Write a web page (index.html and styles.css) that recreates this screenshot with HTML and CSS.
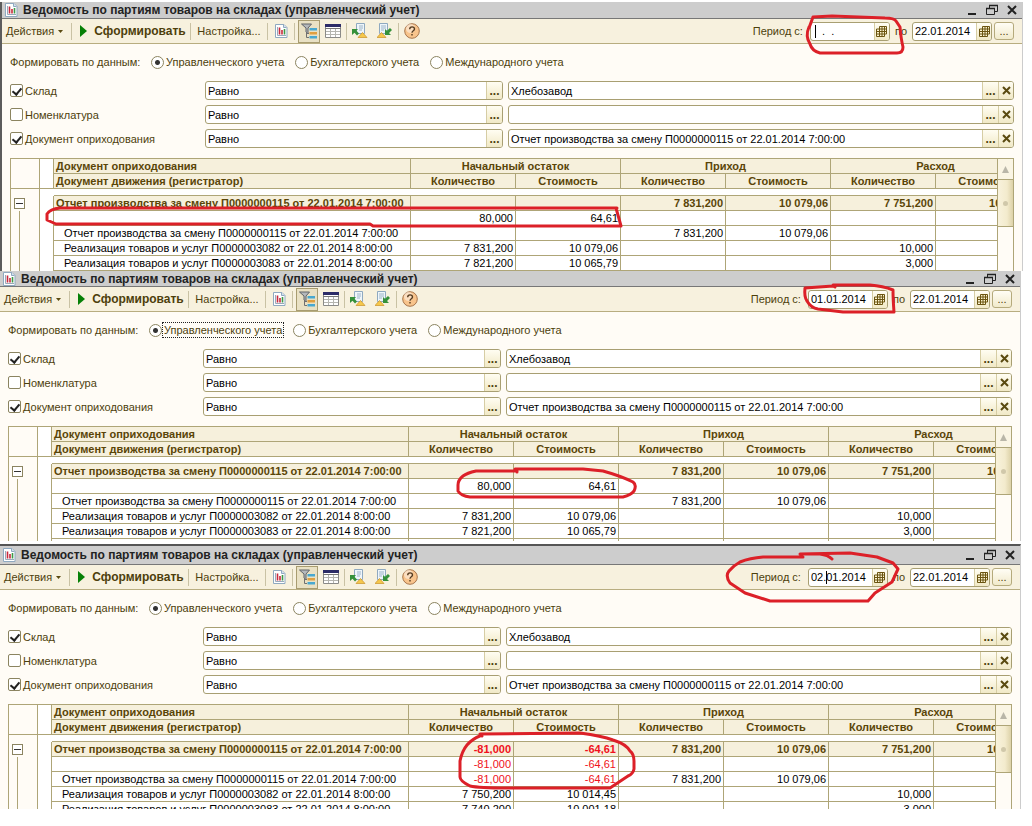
FILE: index.html
```html
<!DOCTYPE html>
<html lang="ru">
<head>
<meta charset="utf-8">
<title>Ведомость по партиям товаров на складах</title>
<link rel="stylesheet" href="styles.css">
</head>
<body>
<svg class="defs" aria-hidden="true">
  <symbol id="i-report" viewBox="0 0 14 14">
    <path d="M1.500.5h8.500l3 3v10H1.500z" fill="#fff" stroke="#8fa9c0"/><path d="M9.500.5v3h3" fill="#d5e2ee" stroke="#8fa9c0"/>
    <path d="M3.500 3v8.500H12" fill="none" stroke="#9ab"/><path d="M5.500 3.500v7M8 6v4.500" stroke="#c8283c" stroke-width="1.600"/><path d="M10.500 5v5.500" stroke="#3c9a48" stroke-width="1.600"/>
  </symbol>
  <symbol id="i-filter" viewBox="0 0 16 16">
    <path d="M.5 1h10L7 5v6l-2-2V5z" fill="#b4b8bc" stroke="#606468"/><path d="M5.500 9v5.500H8M6 10.500h2" fill="none" stroke="#707070"/>
    <path d="M8.500 5H16v2.500H8.500z" fill="#48a8d0"/><path d="M8.500 9H16v2.500H8.500z" fill="#e0a040"/><path d="M8.500 13H16v2.500H8.500z" fill="#48a8d0"/>
  </symbol>
  <symbol id="i-grid" viewBox="0 0 16 14">
    <path d="M.5.5h15v13H.5z" fill="#fff" stroke="#8a8a88"/><path d="M0 0h16v3H0z" fill="#2c2c68"/><path d="M0 4.500h16" stroke="#777"/>
    <path d="M1 7.500h14M1 10.500h14M5.500 5v8M10.500 5v8" stroke="#b5b5b0"/>
  </symbol>
  <symbol id="i-import" viewBox="0 0 16 16">
    <path d="M4.500.5h8v10h-8z" fill="#eef5fa" stroke="#8fa9c0"/><path d="M7 3h4M7 5h4M7 7h3" stroke="#9db4c8"/>
    <path d="M0 6h6L4.500 7.800 7 10.500 5 12.500 2.500 9.800 0 12z" fill="#35913a"/><path d="M6 14.500 10.500 9.500l4.500 5z" fill="#f5c84c" stroke="#c89028" stroke-width=".7"/>
  </symbol>
  <symbol id="i-export" viewBox="0 0 16 16">
    <path d="M2.500.5h8v10h-8z" fill="#eef5fa" stroke="#8fa9c0"/><path d="M4 3h5M4 5h5M4 7h3" stroke="#9db4c8"/>
    <path d="M8 12V6l2 1.800L13 5l2 2-3 2.900L14 12z" fill="#35913a"/><path d="M0 14.500 4.500 9.500l4.500 5z" fill="#f5c84c" stroke="#c89028" stroke-width=".7"/>
  </symbol>
  <symbol id="i-help" viewBox="0 0 16 16">
    <circle cx="8" cy="8" r="7.300" fill="#f8c48c" stroke="#a8764c"/><circle cx="6.500" cy="5.500" r="4.500" fill="#fff" opacity=".45"/>
    <path d="M5.700 6.200c0-3.200 4.800-3 4.800-.3C10.500 7.700 8 7.700 8 9.800M8 11v1.600" fill="none" stroke="#553c20" stroke-width="1.400"/>
  </symbol>
  <symbol id="i-cal" viewBox="0 0 11 11">
    <path d="M3.500.5h7v7.500h-2v2.500h-8v-7.500h3z" fill="#fbf3cf" stroke="#6b5410"/><path d="M1 5.500h9M1 8h8M3.500 2v8M6 1v9M8.500 1v8M3 3h7" fill="none" stroke="#6b5410"/>
  </symbol>
  <symbol id="i-x" viewBox="0 0 9 9"><path d="M1 1l7 7M8 1l-7 7" stroke="#5a4a10" stroke-width="2"/></symbol>
  <symbol id="i-play" viewBox="0 0 8 12"><path d="M0 0l7 6-7 6z" fill="#068006"/></symbol>
  <symbol id="i-down" viewBox="0 0 5 3"><path d="M0 0h5L2.500 3z" fill="#5a4a10"/></symbol>
  <symbol id="i-up" viewBox="0 0 7 7"><path d="M0 7l3.500-7L7 7z" fill="#b9b6a8"/></symbol>
  <symbol id="i-min" viewBox="0 0 12 12"><path d="M2 10h8" stroke="#222" stroke-width="2"/></symbol>
  <symbol id="i-restore" viewBox="0 0 12 12"><path d="M3.500 4V1.500h8v6H8.500M.5 4.500h8v6h-8z" fill="none" stroke="#222"/><path d="M3 1.500h9M0 4.500h9" stroke="#222" stroke-width="1.500"/></symbol>
  <symbol id="i-close" viewBox="0 0 12 12"><path d="M2 2l8 8M10 2l-8 8" stroke="#222" stroke-width="2"/></symbol>
</svg>

<main>
<section class="window window-first">
  <header class="title">
    <svg class="s14"><use href="#i-report"/></svg><h2>Ведомость по партиям товаров на складах (управленческий учет)</h2>
    <button aria-label="Свернуть"><svg class="s12"><use href="#i-min"/></svg></button><button aria-label="Восстановить"><svg class="s12"><use href="#i-restore"/></svg></button><button aria-label="Закрыть"><svg class="s12"><use href="#i-close"/></svg></button>
  </header>
  <div class="toolbar">
    <button class="menu">Действия<svg class="down"><use href="#i-down"/></svg></button><i class="sep"></i>
    <button class="run"><svg class="play"><use href="#i-play"/></svg>Сформировать</button><i class="sep"></i>
    <button class="setup">Настройка...</button><i class="sep"></i>
    <button class="tool" aria-label="Отчет"><svg class="s14"><use href="#i-report"/></svg></button><i class="sep"></i>
    <button class="tool pressed" aria-label="Отбор"><svg class="s16"><use href="#i-filter"/></svg></button>
    <button class="tool" aria-label="Таблица"><svg class="grid-icon"><use href="#i-grid"/></svg></button><i class="sep"></i>
    <button class="tool" aria-label="Восстановить значения"><svg class="s16"><use href="#i-import"/></svg></button>
    <button class="tool" aria-label="Сохранить значения"><svg class="s16"><use href="#i-export"/></svg></button><i class="sep"></i>
    <button class="tool" aria-label="Справка"><svg class="s16"><use href="#i-help"/></svg></button>
    <div class="period">
      <label for="a-from">Период с:</label>
      <span class="field date"><input id="a-from" value="   .  ."><i class="caret caret-start"></i><button aria-label="Календарь"><svg class="cal"><use href="#i-cal"/></svg></button></span>
      <label for="a-to" class="to">по</label>
      <span class="field date"><input id="a-to" value="22.01.2014"><button aria-label="Календарь"><svg class="cal"><use href="#i-cal"/></svg></button></span>
      <button class="more">...</button>
    </div>
  </div>
  <div class="form">
    <div class="source"><span>Формировать по данным:</span>
      <label class="choice"><input type="radio" name="a" checked><span>Управленческого учета</span></label>
      <label class="choice"><input type="radio" name="a"><span>Бухгалтерского учета</span></label>
      <label class="choice"><input type="radio" name="a"><span>Международного учета</span></label>
    </div>
    <div class="filters">
      <label class="check"><input type="checkbox" checked>Склад</label>
      <span class="field"><input aria-label="Условие: склад" value="Равно"><button class="dots">...</button></span>
      <span class="field"><input aria-label="Склад, значение" value="Хлебозавод"><button class="dots">...</button><button aria-label="Очистить"><svg class="x"><use href="#i-x"/></svg></button></span>
      <label class="check"><input type="checkbox">Номенклатура</label>
      <span class="field"><input aria-label="Условие: номенклатура" value="Равно"><button class="dots">...</button></span>
      <span class="field"><input aria-label="Номенклатура, значение" value=""><button class="dots">...</button><button aria-label="Очистить"><svg class="x"><use href="#i-x"/></svg></button></span>
      <label class="check"><input type="checkbox" checked>Документ оприходования</label>
      <span class="field"><input aria-label="Условие: документ" value="Равно"><button class="dots">...</button></span>
      <span class="field"><input aria-label="Документ, значение" value="Отчет производства за смену П0000000115 от 22.01.2014 7:00:00"><button class="dots">...</button><button aria-label="Очистить"><svg class="x"><use href="#i-x"/></svg></button></span>
    </div>
    <div class="sheet sheet-a">
      <div class="view"><table>
        <colgroup><col class="c-tree"><col class="c-gap"><col class="c-doc"><col class="c-num" span="6"></colgroup>
        <thead>
          <tr><td rowspan="2" class="tree"></td><td rowspan="2" class="blank"></td><th class="doc">Документ оприходования</th><th colspan="2">Начальный остаток</th><th colspan="2">Приход</th><th colspan="2">Расход</th></tr>
          <tr><th class="doc">Документ движения (регистратор)</th><th>Количество</th><th>Стоимость</th><th>Количество</th><th>Стоимость</th><th>Количество</th><th>Стоимость</th></tr>
        </thead>
        <tbody>
          <tr class="space"><td class="tree"></td><td></td><td colspan="7"></td></tr>
          <tr class="total"><td class="tree"><button class="fold" aria-label="Свернуть группу"></button></td><td></td><td class="doc">Отчет производства за смену П0000000115 от 22.01.2014 7:00:00</td><td></td><td></td><td>7 831,200</td><td>10 079,06</td><td>7 751,200</td><td>10 065,79</td></tr>
          <tr><td class="tree line"></td><td></td><td class="doc"></td><td>80,000</td><td>64,61</td><td></td><td></td><td></td><td></td></tr>
          <tr><td class="tree line"></td><td></td><td class="doc">Отчет производства за смену П0000000115 от 22.01.2014 7:00:00</td><td></td><td></td><td>7 831,200</td><td>10 079,06</td><td></td><td></td></tr>
          <tr><td class="tree line"></td><td></td><td class="doc">Реализация товаров и услуг П0000003082 от 22.01.2014 8:00:00</td><td>7 831,200</td><td>10 079,06</td><td></td><td></td><td>10,000</td><td></td></tr>
          <tr><td class="tree line"></td><td></td><td class="doc">Реализация товаров и услуг П0000003083 от 22.01.2014 8:00:00</td><td>7 821,200</td><td>10 065,79</td><td></td><td></td><td>3,000</td><td></td></tr>
        </tbody>
      </table></div>
      <div class="scroll"><button class="up" aria-label="Вверх"><svg class="s7"><use href="#i-up"/></svg></button><div class="thumb"><i></i></div></div>
    </div>
  </div>
  <svg class="mark mark-a-date" viewBox="800 10 110 50"><path d="M809 28l4-11 19-1 53 2q9 0 11 3l4 6q1 12 3 20 0 6-6 6l-77 0q-8-2-10-9-5-8-1-17"/></svg>
  <svg class="mark mark-a-row" viewBox="40 200 590 30"><path d="M617 208H60q-10 1-13 6v6l9 4H370l3 2H621L616 208"/></svg>
</section>

<section class="window window-second">
  <header class="title">
    <svg class="s14"><use href="#i-report"/></svg><h2>Ведомость по партиям товаров на складах (управленческий учет)</h2>
    <button aria-label="Свернуть"><svg class="s12"><use href="#i-min"/></svg></button><button aria-label="Восстановить"><svg class="s12"><use href="#i-restore"/></svg></button><button aria-label="Закрыть"><svg class="s12"><use href="#i-close"/></svg></button>
  </header>
  <div class="toolbar">
    <button class="menu">Действия<svg class="down"><use href="#i-down"/></svg></button><i class="sep"></i>
    <button class="run"><svg class="play"><use href="#i-play"/></svg>Сформировать</button><i class="sep"></i>
    <button class="setup">Настройка...</button><i class="sep"></i>
    <button class="tool" aria-label="Отчет"><svg class="s14"><use href="#i-report"/></svg></button><i class="sep"></i>
    <button class="tool pressed" aria-label="Отбор"><svg class="s16"><use href="#i-filter"/></svg></button>
    <button class="tool" aria-label="Таблица"><svg class="grid-icon"><use href="#i-grid"/></svg></button><i class="sep"></i>
    <button class="tool" aria-label="Восстановить значения"><svg class="s16"><use href="#i-import"/></svg></button>
    <button class="tool" aria-label="Сохранить значения"><svg class="s16"><use href="#i-export"/></svg></button><i class="sep"></i>
    <button class="tool" aria-label="Справка"><svg class="s16"><use href="#i-help"/></svg></button>
    <div class="period">
      <label for="b-from">Период с:</label>
      <span class="field date"><input id="b-from" value="01.01.2014"><button aria-label="Календарь"><svg class="cal"><use href="#i-cal"/></svg></button></span>
      <label for="b-to" class="to">по</label>
      <span class="field date"><input id="b-to" value="22.01.2014"><button aria-label="Календарь"><svg class="cal"><use href="#i-cal"/></svg></button></span>
      <button class="more">...</button>
    </div>
  </div>
  <div class="form">
    <div class="source"><span>Формировать по данным:</span>
      <label class="choice focused"><input type="radio" name="b" checked><span>Управленческого учета</span></label>
      <label class="choice"><input type="radio" name="b"><span>Бухгалтерского учета</span></label>
      <label class="choice"><input type="radio" name="b"><span>Международного учета</span></label>
    </div>
    <div class="filters">
      <label class="check"><input type="checkbox" checked>Склад</label>
      <span class="field"><input aria-label="Условие: склад" value="Равно"><button class="dots">...</button></span>
      <span class="field"><input aria-label="Склад, значение" value="Хлебозавод"><button class="dots">...</button><button aria-label="Очистить"><svg class="x"><use href="#i-x"/></svg></button></span>
      <label class="check"><input type="checkbox">Номенклатура</label>
      <span class="field"><input aria-label="Условие: номенклатура" value="Равно"><button class="dots">...</button></span>
      <span class="field"><input aria-label="Номенклатура, значение" value=""><button class="dots">...</button><button aria-label="Очистить"><svg class="x"><use href="#i-x"/></svg></button></span>
      <label class="check"><input type="checkbox" checked>Документ оприходования</label>
      <span class="field"><input aria-label="Условие: документ" value="Равно"><button class="dots">...</button></span>
      <span class="field"><input aria-label="Документ, значение" value="Отчет производства за смену П0000000115 от 22.01.2014 7:00:00"><button class="dots">...</button><button aria-label="Очистить"><svg class="x"><use href="#i-x"/></svg></button></span>
    </div>
    <div class="sheet sheet-b">
      <div class="view"><table>
        <colgroup><col class="c-tree"><col class="c-gap"><col class="c-doc"><col class="c-num" span="6"></colgroup>
        <thead>
          <tr><td rowspan="2" class="tree"></td><td rowspan="2" class="blank"></td><th class="doc">Документ оприходования</th><th colspan="2">Начальный остаток</th><th colspan="2">Приход</th><th colspan="2">Расход</th></tr>
          <tr><th class="doc">Документ движения (регистратор)</th><th>Количество</th><th>Стоимость</th><th>Количество</th><th>Стоимость</th><th>Количество</th><th>Стоимость</th></tr>
        </thead>
        <tbody>
          <tr class="space"><td class="tree"></td><td></td><td colspan="7"></td></tr>
          <tr class="total"><td class="tree"><button class="fold" aria-label="Свернуть группу"></button></td><td></td><td class="doc">Отчет производства за смену П0000000115 от 22.01.2014 7:00:00</td><td></td><td></td><td>7 831,200</td><td>10 079,06</td><td>7 751,200</td><td>10 065,79</td></tr>
          <tr><td class="tree line"></td><td></td><td class="doc"></td><td>80,000</td><td>64,61</td><td></td><td></td><td></td><td></td></tr>
          <tr><td class="tree line"></td><td></td><td class="doc">Отчет производства за смену П0000000115 от 22.01.2014 7:00:00</td><td></td><td></td><td>7 831,200</td><td>10 079,06</td><td></td><td></td></tr>
          <tr><td class="tree line"></td><td></td><td class="doc">Реализация товаров и услуг П0000003082 от 22.01.2014 8:00:00</td><td>7 831,200</td><td>10 079,06</td><td></td><td></td><td>10,000</td><td></td></tr>
          <tr><td class="tree line"></td><td></td><td class="doc">Реализация товаров и услуг П0000003083 от 22.01.2014 8:00:00</td><td>7 821,200</td><td>10 065,79</td><td></td><td></td><td>3,000</td><td></td></tr>
          <tr><td class="tree line"></td><td></td><td class="doc"></td><td></td><td></td><td></td><td></td><td></td><td></td></tr>
        </tbody>
      </table></div>
      <div class="scroll"><button class="up" aria-label="Вверх"><svg class="s7"><use href="#i-up"/></svg></button><div class="thumb"><i></i></div></div>
    </div>
  </div>
  <svg class="mark mark-b-date" viewBox="798 280 104 36"><path d="M835 287l-2-1-28 2q-1 9 2 13 4 7 11 8l25 3 51 0q-1-13-1-22-10-4-23-5h-37"/></svg>
  <svg class="mark mark-b-cell" viewBox="450 464 190 38"><path d="M517 472v-1h-41q-9 2-13 5-5 4-5 9v6q3 5 12 6h153q8-2 11-6 3-6-1-9-12-6-30-11l-20-2h-68"/></svg>
</section>

<section class="window window-third">
  <header class="title">
    <svg class="s14"><use href="#i-report"/></svg><h2>Ведомость по партиям товаров на складах (управленческий учет)</h2>
    <button aria-label="Свернуть"><svg class="s12"><use href="#i-min"/></svg></button><button aria-label="Восстановить"><svg class="s12"><use href="#i-restore"/></svg></button><button aria-label="Закрыть"><svg class="s12"><use href="#i-close"/></svg></button>
  </header>
  <div class="toolbar">
    <button class="menu">Действия<svg class="down"><use href="#i-down"/></svg></button><i class="sep"></i>
    <button class="run"><svg class="play"><use href="#i-play"/></svg>Сформировать</button><i class="sep"></i>
    <button class="setup">Настройка...</button><i class="sep"></i>
    <button class="tool" aria-label="Отчет"><svg class="s14"><use href="#i-report"/></svg></button><i class="sep"></i>
    <button class="tool pressed" aria-label="Отбор"><svg class="s16"><use href="#i-filter"/></svg></button>
    <button class="tool" aria-label="Таблица"><svg class="grid-icon"><use href="#i-grid"/></svg></button><i class="sep"></i>
    <button class="tool" aria-label="Восстановить значения"><svg class="s16"><use href="#i-import"/></svg></button>
    <button class="tool" aria-label="Сохранить значения"><svg class="s16"><use href="#i-export"/></svg></button><i class="sep"></i>
    <button class="tool" aria-label="Справка"><svg class="s16"><use href="#i-help"/></svg></button>
    <div class="period">
      <label for="c-from">Период с:</label>
      <span class="field date"><input id="c-from" value="02.01.2014"><i class="caret caret-day"></i><button aria-label="Календарь"><svg class="cal"><use href="#i-cal"/></svg></button></span>
      <label for="c-to" class="to">по</label>
      <span class="field date"><input id="c-to" value="22.01.2014"><button aria-label="Календарь"><svg class="cal"><use href="#i-cal"/></svg></button></span>
      <button class="more">...</button>
    </div>
  </div>
  <div class="form">
    <div class="source"><span>Формировать по данным:</span>
      <label class="choice"><input type="radio" name="c" checked><span>Управленческого учета</span></label>
      <label class="choice"><input type="radio" name="c"><span>Бухгалтерского учета</span></label>
      <label class="choice"><input type="radio" name="c"><span>Международного учета</span></label>
    </div>
    <div class="filters">
      <label class="check"><input type="checkbox" checked>Склад</label>
      <span class="field"><input aria-label="Условие: склад" value="Равно"><button class="dots">...</button></span>
      <span class="field"><input aria-label="Склад, значение" value="Хлебозавод"><button class="dots">...</button><button aria-label="Очистить"><svg class="x"><use href="#i-x"/></svg></button></span>
      <label class="check"><input type="checkbox">Номенклатура</label>
      <span class="field"><input aria-label="Условие: номенклатура" value="Равно"><button class="dots">...</button></span>
      <span class="field"><input aria-label="Номенклатура, значение" value=""><button class="dots">...</button><button aria-label="Очистить"><svg class="x"><use href="#i-x"/></svg></button></span>
      <label class="check"><input type="checkbox" checked>Документ оприходования</label>
      <span class="field"><input aria-label="Условие: документ" value="Равно"><button class="dots">...</button></span>
      <span class="field"><input aria-label="Документ, значение" value="Отчет производства за смену П0000000115 от 22.01.2014 7:00:00"><button class="dots">...</button><button aria-label="Очистить"><svg class="x"><use href="#i-x"/></svg></button></span>
    </div>
    <div class="sheet sheet-c">
      <div class="view"><table>
        <colgroup><col class="c-tree"><col class="c-gap"><col class="c-doc"><col class="c-num" span="6"></colgroup>
        <thead>
          <tr><td rowspan="2" class="tree"></td><td rowspan="2" class="blank"></td><th class="doc">Документ оприходования</th><th colspan="2">Начальный остаток</th><th colspan="2">Приход</th><th colspan="2">Расход</th></tr>
          <tr><th class="doc">Документ движения (регистратор)</th><th>Количество</th><th>Стоимость</th><th>Количество</th><th>Стоимость</th><th>Количество</th><th>Стоимость</th></tr>
        </thead>
        <tbody>
          <tr class="space"><td class="tree"></td><td></td><td colspan="7"></td></tr>
          <tr class="total"><td class="tree"><button class="fold" aria-label="Свернуть группу"></button></td><td></td><td class="doc">Отчет производства за смену П0000000115 от 22.01.2014 7:00:00</td><td class="neg">-81,000</td><td class="neg">-64,61</td><td>7 831,200</td><td>10 079,06</td><td>7 751,200</td><td>10 065,79</td></tr>
          <tr><td class="tree line"></td><td></td><td class="doc"></td><td class="neg">-81,000</td><td class="neg">-64,61</td><td></td><td></td><td></td><td></td></tr>
          <tr><td class="tree line"></td><td></td><td class="doc">Отчет производства за смену П0000000115 от 22.01.2014 7:00:00</td><td class="neg">-81,000</td><td class="neg">-64,61</td><td>7 831,200</td><td>10 079,06</td><td></td><td></td></tr>
          <tr><td class="tree line"></td><td></td><td class="doc">Реализация товаров и услуг П0000003082 от 22.01.2014 8:00:00</td><td>7 750,200</td><td>10 014,45</td><td></td><td></td><td>10,000</td><td></td></tr>
          <tr><td class="tree line"></td><td></td><td class="doc">Реализация товаров и услуг П0000003083 от 22.01.2014 8:00:00</td><td>7 740,200</td><td>10 001,18</td><td></td><td></td><td>3,000</td><td></td></tr>
        </tbody>
      </table></div>
      <div class="scroll"><button class="up" aria-label="Вверх"><svg class="s7"><use href="#i-up"/></svg></button><div class="thumb"><i></i></div></div>
    </div>
  </div>
  <svg class="mark mark-c-date" viewBox="720 548 184 58"><path d="M832 559q-4-4-12-5h-20l50-1 27 4 16 6 5 6-6 13-17 11-7 8h-98l-25-8-15-10q-5-7-1-12 4-5 11-9 10-4 23-5h40"/></svg>
  <svg class="mark mark-c-cell" viewBox="450 728 190 66"><path d="M482 736l-2-2 100-1q22 3 33 7 13 4 17 11 4 3 4 10v8q-1 5-6 7l-18 12H507q-28 0-37-2-10-5-10-9v-16q2-10 7-16 5-6 15-10"/></svg>
</section>
</main>
</body>
</html>
```
FILE: styles.css
```css
* { box-sizing: border-box; }
body { margin: 0; padding-top: 2px; background: #fff; font: 11px/16px "Liberation Sans", Arial, sans-serif; color: #4d3f0c; }
button, input { font: inherit; color: inherit; margin: 0; }
button { padding: 0; border: 0; background: none; display: flex; align-items: center; justify-content: center; }
svg { display: block; flex: none; }
.defs { position: absolute; width: 0; height: 0; }
.s7 { width: 7px; height: 7px; }
.s12 { width: 12px; height: 12px; }
.s14 { width: 14px; height: 14px; }
.s16 { width: 16px; height: 16px; }
.grid-icon { width: 16px; height: 14px; }

.window { position: relative; margin-right: 11px; border-right: 1px solid #ccc; background: #fffcf6; }
.window-first { margin-right: 9px; border-left: 2px solid #5c5c5c; }
.window-third { margin-top: 3px; border-top: 2px solid #555; }

.title { display: flex; align-items: center; gap: 8px; height: 17px; padding: 0 4px 0 2px; background: #cdcdcd; border-bottom: 1px solid #777; color: #222; overflow: hidden; }
.window-second .title { height: 16px; }
.window-third .title { height: 19px; }
.title h2 { flex: 1; margin: 0 0 0 -3px; font-size: 12px; line-height: 14px; font-weight: bold; white-space: nowrap; }

.toolbar { display: flex; align-items: center; height: 25px; padding: 0 8px 0 4px; background: #f7f1de; border-bottom: 1px solid #b8ad80; }
.sep { width: 1px; height: 17px; background: #c9c2a4; }
.menu { width: 65px; justify-content: flex-start; gap: 4px; }
.down { width: 5px; height: 3px; }
.run { width: 118px; padding-left: 4px; gap: 6px; font-size: 12px; font-weight: bold; }
.play { width: 8px; height: 12px; }
.setup { width: 76px; }
.tool { width: 24px; height: 23px; margin: 0 1px; }
.tool + .tool { margin-left: 0; }
.tool.pressed { width: 22px; margin-left: 3px; background: #e9e1c4; border: 1px solid #a89c70; }
.period { display: flex; align-items: center; margin-left: auto; }
.period label { margin-right: 7px; }
.period .to { margin: 0 5px; }
.more { width: 20px; height: 18px; margin-left: 2px; border: 1px solid #b5aa7c; border-radius: 3px; background: linear-gradient(#fffdf5, #f1eacb); }

.field { position: relative; display: flex; height: 19px; min-width: 0; border: 1px solid #a89f72; border-radius: 3px; background: #fff; overflow: hidden; }
.field input { flex: 1; min-width: 0; width: 0; padding: 0 0 0 2px; border: 0; background: none; outline: 0; color: #000; }
.field button { width: 15px; border-left: 1px solid #d6cda4; background: linear-gradient(#fffdf2, #f1e9c6); }
.field .dots { width: 16px; font-size: 12px; font-weight: bold; }
.date { width: 80px; }
.cal { width: 11px; height: 11px; }
.x { width: 9px; height: 9px; }
.caret { position: absolute; top: 2px; width: 1px; height: 13px; background: #000; }
.caret-start { left: 4px; }
.caret-day { left: 17px; }

.form { padding: 9px 8px 0; }
.source { display: flex; align-items: center; height: 18px; margin-bottom: 10px; white-space: nowrap; }
.source > span { width: 141px; }
.choice { display: flex; align-items: center; gap: 1px; margin-right: 10px; }
.choice span { padding: 0 1px; line-height: 14px; }
.focused span { outline: 1px dotted #222; }
input[type="radio"], input[type="checkbox"] { appearance: none; flex: none; width: 13px; height: 13px; border: 1px solid #8b8460; background: #fff; }
input[type="radio"] { border-radius: 50%; }
input[type="radio"]:checked { background: radial-gradient(circle, #333 0 2px, #fff 3px); }
input[type="checkbox"] { border-radius: 2px; }
input[type="checkbox"]:checked::before { content: ""; display: block; width: 4px; height: 7px; margin: 1px auto; border: solid #222; border-width: 0 2px 2px 0; transform: rotate(40deg); }
.filters { display: grid; grid-template-columns: 190px minmax(0, 298fr) minmax(0, 506fr); gap: 5px; margin-bottom: 10px; }
.check { display: flex; align-items: center; gap: 2px; }

.sheet { display: flex; overflow: hidden; border-top: 1px solid #aea577; border-left: 1px solid #aea577; }
.sheet-a { height: 113px; }
.sheet-b { height: 115px; }
.sheet-c { height: 105px; }
.view { flex: 1; min-width: 0; overflow: hidden; }
table { table-layout: fixed; width: 1030px; border-collapse: separate; border-spacing: 0; font-size: 11px; line-height: 14px; }
.c-tree { width: 29px; }
.c-gap { width: 14px; }
.c-doc { width: 357px; }
.c-num { width: 105px; }
th, td { height: 15px; padding: 0 2px; border: solid #aea577; border-width: 0 1px 1px 0; white-space: nowrap; text-align: right; background: #fff; color: #000; overflow: hidden; }
th { text-align: center; background: #f6f0dc; color: #5a4508; }
.doc { text-align: left; padding-left: 10px; }
th.doc, .total .doc { padding-left: 2px; }
tbody td:nth-child(2) { border-bottom: 0; }
.total td { font-weight: bold; background: #f6f0dc; color: #5a4508; }
.total td:nth-child(2) { background: #fff; }
td.tree, .total td.tree { padding: 0; background: #fffcf6; }
tbody td.tree { border-bottom: 0; }
.space td { height: 7px; line-height: 0; border-right: 0; }
.space td.tree { border-right: 1px solid #aea577; }
tbody .line { background: linear-gradient(#aea577, #aea577) 8px 0 / 1px 100% no-repeat #fffcf6; }
.fold { width: 11px; height: 11px; margin-left: 3px; border: 1px solid #8b8460; background: linear-gradient(#333, #333) center / 7px 1px no-repeat #fff; }
td.neg, .total td.neg { color: #f01020; }
.scroll { width: 17px; border: solid #aea577; border-width: 0 1px; background: #fffcf6; }
.up { width: 100%; height: 20px; background: #faf5e4; }
.thumb { display: flex; align-items: center; justify-content: center; height: 48px; border: solid #aea577; border-width: 1px 0; background: linear-gradient(90deg, #f8f2dc, #f3ebcd 60%, #ddd2a8); }
.thumb i { width: 5px; height: 5px; border-radius: 50%; background: #d0c8aa; }

.mark { position: absolute; overflow: visible; fill: none; stroke: #dc2028; stroke-width: 3; stroke-linejoin: round; stroke-linecap: round; pointer-events: none; }
.mark-a-date { right: 112px; top: 8px; width: 110px; height: 50px; }
.mark-a-row { left: 38px; top: 198px; width: 590px; height: 30px; }
.mark-b-date { right: 118px; top: 9px; width: 104px; height: 36px; }
.mark-b-cell { left: 450px; top: 193px; width: 190px; height: 38px; }
.mark-c-date { right: 116px; top: 2px; width: 184px; height: 58px; }
.mark-c-cell { left: 450px; top: 182px; width: 190px; height: 66px; }
```
